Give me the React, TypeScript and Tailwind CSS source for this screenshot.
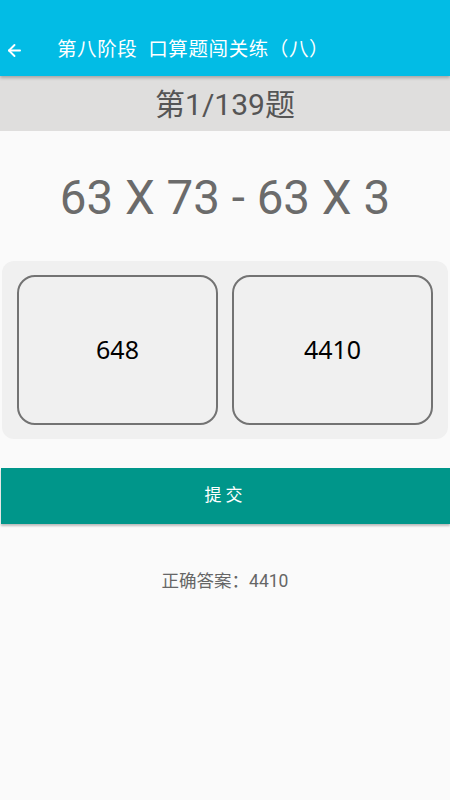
import { ArrowLeft } from "lucide-react";

const options = ["648", "4410"];

export default function App() {
  return (
    <div className="flex min-h-[800px] w-[450px] flex-col bg-[#fafafa] font-['Roboto','Noto_Sans_CJK_SC',sans-serif]">
      <header className="relative z-10 flex h-[76px] items-end bg-[#02bce5] pb-[12px] shadow-[0_2px_3px_rgba(0,0,0,0.25)]">
        <ArrowLeft className="ml-[5px] mb-[4px] h-[19px] w-[19px] text-white" strokeWidth={2.4} />
        <h1 className="ml-[33px] text-[19.5px] tracking-[0.6px] text-white">
          第八阶段&nbsp;&nbsp;口算题闯关练（八）
        </h1>
      </header>

      <div className="flex h-[55px] items-center justify-center bg-[#dfdedd] pt-[2px] text-[30px] text-[#555]">
        第1/139题
      </div>

      <div className="flex h-[130px] items-center justify-center pt-[5px] text-[47.5px] text-[#6b6b6b]">
        63 X 73 - 63 X 3
      </div>

      <div className="mx-[2px] flex gap-[14px] rounded-[12px] bg-[#f0f0f0] px-[15px] py-[14px]">
        {options.map((opt) => (
          <button
            key={opt}
            className="flex h-[150px] flex-1 items-center justify-center rounded-[18px] border-2 border-[#737373] bg-[#f0f0f0] font-['Noto_Sans',sans-serif] text-[25px] text-black"
          >
            {opt}
          </button>
        ))}
      </div>

      <button className="mt-[29px] ml-[1px] flex h-[56px] items-center justify-center bg-[#00968a] text-[17px] tracking-[4px] text-white shadow-[0_2px_2px_rgba(0,0,0,0.25)]">
        提交
      </button>

      <p className="mt-[44px] text-center text-[17.5px] text-[#666]">正确答案：4410</p>
    </div>
  );
}
